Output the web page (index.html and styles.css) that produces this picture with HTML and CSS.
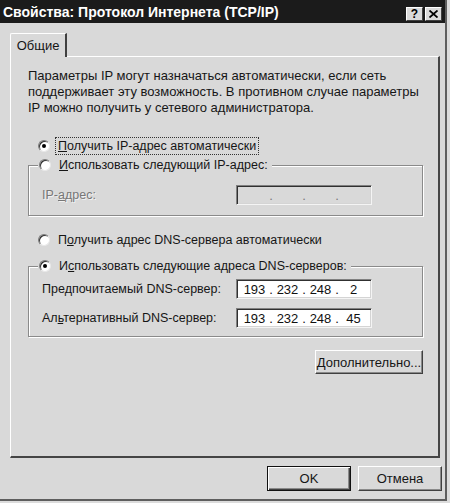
FILE: index.html
```html
<!DOCTYPE html>
<html lang="ru">
<head>
<meta charset="utf-8">
<link rel="stylesheet" href="styles.css">
</head>
<body>
<div class="window">
  <div class="titlebar">
    <span class="title">Свойства: Протокол Интернета (TCP/IP)</span>
    <div class="tbtns">
      <span class="tbtn help">?</span>
      <span class="tbtn close"><svg width="9" height="8" viewBox="0 0 9 8"><path d="M0.5 0.5 L8.5 7.5 M8.5 0.5 L0.5 7.5" stroke="#000" stroke-width="1.8" fill="none"/></svg></span>
    </div>
  </div>
  <div class="client">
    <div class="tabs"><div class="tab">Общие</div></div>
    <div class="panel">
      <p class="intro">Параметры IP могут назначаться автоматически, если сеть поддерживает эту возможность. В противном случае параметры IP можно получить у сетевого администратора.</p>

      <div class="radio-row first">
        <span class="radio checked"></span>
        <span class="label focus"><u>П</u>олучить IP-адрес автоматически</span>
      </div>

      <div class="group g1">
        <div class="legend">
          <span class="radio"></span>
          <span class="label"><u>И</u>спользовать следующий IP-адрес:</span>
        </div>
        <div class="field-row">
          <span class="flabel disabled">IP-<u>а</u>дрес:</span>
          <div class="ipbox disabled">
            <span class="seg"></span><span class="dot">.</span><span class="seg"></span><span class="dot">.</span><span class="seg"></span><span class="dot">.</span><span class="seg"></span>
          </div>
        </div>
      </div>

      <div class="radio-row third">
        <span class="radio"></span>
        <span class="label">П<u>о</u>лучить адрес DNS-сервера автоматически</span>
      </div>

      <div class="group g2">
        <div class="legend">
          <span class="radio checked"></span>
          <span class="label">И<u>с</u>пользовать следующие адреса DNS-серверов:</span>
        </div>
        <div class="field-row r1">
          <span class="flabel">Пре<u>д</u>почитаемый DNS-сервер:</span>
          <div class="ipbox">
            <span class="seg">193</span><span class="dot">.</span><span class="seg">232</span><span class="dot">.</span><span class="seg">248</span><span class="dot">.</span><span class="seg">2</span>
          </div>
        </div>
        <div class="field-row r2">
          <span class="flabel">Ал<u>ь</u>тернативный DNS-сервер:</span>
          <div class="ipbox">
            <span class="seg">193</span><span class="dot">.</span><span class="seg">232</span><span class="dot">.</span><span class="seg">248</span><span class="dot">.</span><span class="seg">45</span>
          </div>
        </div>
      </div>

      <div class="adv-row">
        <button class="btn adv"><u>Д</u>ополнительно...</button>
      </div>
    </div>
    <div class="footer">
      <button class="btn default">OK</button>
      <button class="btn">Отмена</button>
    </div>
  </div>
</div>
</body>
</html>
```

FILE: styles.css
```css
html, body {
  margin: 0;
  padding: 0;
}
body {
  background: #dcdcdc;
  width: 450px;
  height: 503px;
  overflow: hidden;
  font-family: "Liberation Sans", Arial, sans-serif;
  font-size: 13px;
  color: #161616;
}
.window {
  width: 445px;
  height: 499px;
  background: #d9d9d9;
  border-right: 2px solid #5e5e5e;
  border-bottom: 2px solid #5e5e5e;
  display: flex;
  flex-direction: column;
}
.titlebar {
  height: 23px;
  background: #1b1b1b;
  display: flex;
  align-items: center;
  justify-content: space-between;
  padding: 0 3px 0 3px;
}
.title {
  color: #fff;
  font-weight: bold;
  font-size: 14px;
}
.tbtns {
  display: flex;
  gap: 2px;
  margin-top: 4px;
}
.tbtn {
  width: 17px;
  height: 14px;
  box-sizing: border-box;
  background: #dadada;
  border-top: 1px solid #fff;
  border-left: 1px solid #fff;
  border-right: 1px solid #404040;
  border-bottom: 1px solid #404040;
  display: flex;
  align-items: center;
  justify-content: center;
  font-weight: bold;
  font-size: 12px;
  line-height: 12px;
  color: #000;
}
.client {
  padding: 10px 4px 0 10px;
  display: flex;
  flex-direction: column;
}
.tabs {
  display: flex;
  height: 23px;
  position: relative;
  z-index: 1;
}
.tab {
  width: 57px;
  height: 24px;
  box-sizing: border-box;
  background: #d9d9d9;
  border-top: 1px solid #fff;
  border-left: 1px solid #fff;
  border-right: 2px solid #404040;
  border-top-left-radius: 2px;
  display: flex;
  align-items: center;
  justify-content: center;
  padding-right: 2px;
  padding-left: 2px;
}
.panel {
  width: 430px;
  height: 402px;
  box-sizing: border-box;
  border-top: 1px solid #fff;
  border-left: 1px solid #fff;
  border-right: 2px solid #454545;
  border-bottom: 2px solid #454545;
  padding: 0 15px 0 17px;
  display: flex;
  flex-direction: column;
}
.intro {
  margin: 11px 0 0 0;
  line-height: 16px;
  width: 395px;
}
.radio-row {
  display: flex;
  align-items: center;
  height: 18px;
  padding-left: 10px;
}
.radio-row.first {
  margin-top: 21px;
}
.radio-row.third {
  margin-top: 15px;
}
.radio {
  width: 12px;
  height: 12px;
  box-sizing: border-box;
  border-radius: 50%;
  background: #fff;
  border: 1px solid;
  border-color: #7a7a7a #e8e8e8 #e8e8e8 #7a7a7a;
  box-shadow: inset 1px 1px 0 #303030;
  position: relative;
  flex: none;
  margin-right: 7px;
}
.radio.checked::after {
  content: "";
  position: absolute;
  left: 3px;
  top: 3px;
  width: 4px;
  height: 4px;
  border-radius: 50%;
  background: #000;
}
.label {
  white-space: nowrap;
  padding: 0 1px;
  font-size: 12.5px;
}
.label.focus {
  outline: 1px dotted #333;
  outline-offset: 1px;
}
.group {
  width: 395px;
  box-sizing: border-box;
  border: 1px solid #8a8a8a;
  box-shadow: inset 1px 1px 0 #fff, 1px 1px 0 #fff;
}
.g1 {
  margin-top: 10px;
  height: 51px;
}
.g2 {
  margin-top: 17px;
  height: 71px;
}
.legend {
  display: flex;
  align-items: center;
  height: 18px;
  margin-top: -10px;
  margin-left: 9px;
  padding: 0 3px 0 1px;
  background: #d9d9d9;
  width: max-content;
}
.field-row {
  display: flex;
  align-items: center;
  justify-content: space-between;
  padding: 0 50px 0 13px;
}
.g1 .field-row {
  margin-top: 11px;
}
.g2 .r1 {
  margin-top: 4px;
}
.g2 .r2 {
  margin-top: 9px;
}
.flabel {
  white-space: nowrap;
  font-size: 12.5px;
}
.flabel.disabled {
  color: #777;
  text-shadow: 1px 1px 0 #f2f2f2;
}
.ipbox {
  width: 136px;
  height: 20px;
  box-sizing: border-box;
  background: #fff;
  border: 1px solid;
  border-color: #808080 #f4f4f4 #f4f4f4 #808080;
  box-shadow: inset 1px 1px 0 #303030, inset -1px -1px 0 #d4d4d4;
  display: flex;
  align-items: center;
  padding-left: 4px;
  font-size: 13px;
  color: #111;
}
.ipbox.disabled {
  background: #d9d9d9;
  color: #7a7a7a;
}
.seg {
  width: 27px;
  text-align: center;
}
.dot {
  width: 6px;
  text-align: center;
}
.adv-row {
  display: flex;
  justify-content: flex-end;
  margin-top: 13px;
}
.btn {
  font-family: "Liberation Sans", Arial, sans-serif;
  font-size: 13px;
  color: #161616;
  background: #d9d9d9;
  height: 25px;
  box-sizing: border-box;
  border: 1px solid;
  border-color: #fff #404040 #404040 #fff;
  box-shadow: inset -1px -1px 0 #8a8a8a;
  padding: 0;
  margin: 0;
}
.adv {
  width: 108px;
  height: 24px;
}
.footer {
  display: flex;
  justify-content: flex-end;
  gap: 7px;
  margin-top: 8px;
  width: 432px;
}
.footer .btn {
  width: 84px;
}
.btn.default {
  border: 1px solid #111;
  box-shadow: inset 1px 1px 0 #fff, inset -1px -1px 0 #404040, inset -2px -2px 0 #8a8a8a;
}
u {
  text-decoration: underline;
  text-underline-offset: 1px;
}
```
